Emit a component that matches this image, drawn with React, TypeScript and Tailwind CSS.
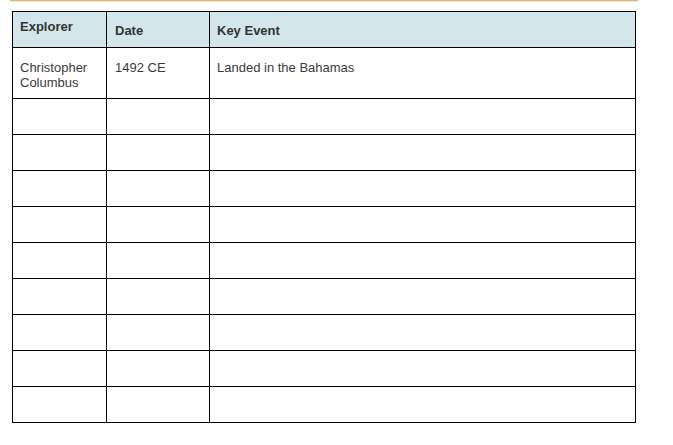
const rows = [
  { explorer: ['Christopher', 'Columbus'], date: '1492 CE', event: 'Landed in the Bahamas' },
]

export default function App() {
  const blanks = Array.from({ length: 9 })
  return (
    <div className="min-h-[445px] bg-white font-['Liberation_Sans',Arial,sans-serif] text-[13px] text-[#3a3a3a]">
      <div className="ml-[10px] w-[628px] h-[1px] bg-[#e2b76c]" />
      <div className="ml-[10px] w-[628px] h-[1px] bg-[#f7e9cf]" />
      <div className="pl-[12px] pt-[9px]">
        <table className="table-fixed w-[623px] border-collapse">
          <colgroup>
            <col className="w-[94px]" />
            <col className="w-[103px]" />
            <col className="w-[426px]" />
          </colgroup>
          <thead>
            <tr className="h-[36px] bg-[#d2e6ec] text-[#333]">
              <th className="border border-black px-[7px] pt-[7px] pb-[12px] text-left align-top font-bold leading-[15px]">Explorer</th>
              <th className="border border-black px-[8px] pt-[11px] text-left align-top font-bold leading-[15px]">Date</th>
              <th className="border border-black px-[7px] pt-[11px] text-left align-top font-bold leading-[15px]">Key Event</th>
            </tr>
          </thead>
          <tbody>
            {rows.map((r) => (
              <tr key={r.date} className="h-[51px]">
                <td className="border border-black px-[7px] pt-[12px] pb-[6px] align-top leading-[15px]">
                  {r.explorer.map((l) => (
                    <div key={l}>{l}</div>
                  ))}
                </td>
                <td className="border border-black px-[8px] pt-[12px] align-top leading-[15px]">{r.date}</td>
                <td className="border border-black px-[7px] pt-[12px] align-top leading-[15px]">{r.event}</td>
              </tr>
            ))}
            {blanks.map((_, i) => (
              <tr key={i} className="h-[36px]">
                <td className="border border-black" />
                <td className="border border-black" />
                <td className="border border-black" />
              </tr>
            ))}
          </tbody>
        </table>
      </div>
    </div>
  )
}
